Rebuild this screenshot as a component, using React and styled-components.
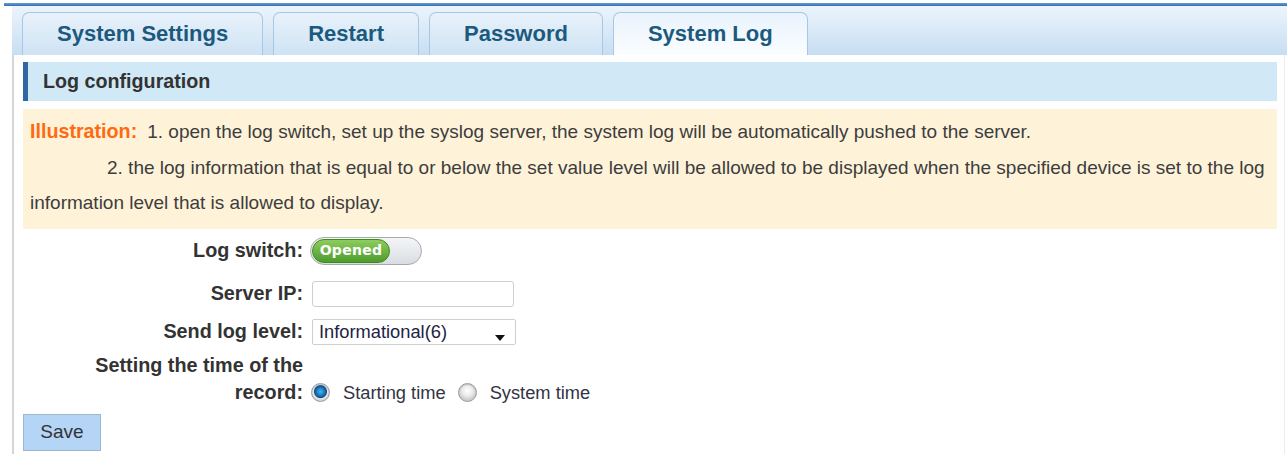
import React, { useState } from "react";
import styled, { createGlobalStyle } from "styled-components";

const GlobalStyle = createGlobalStyle`
  body {
    margin: 0;
    background: #ffffff;
    font-family: "Liberation Sans", Arial, sans-serif;
    color: #333333;
  }
`;

const Page = styled.div`
  padding: 3px 0 0 4px;
`;

const TopLine = styled.div`
  height: 3px;
  background: linear-gradient(#6a9fd6, #2f6db3);
`;

const Frame = styled.div`
  margin-left: 8px;
`;

const TabBar = styled.div`
  display: flex;
  align-items: flex-end;
  gap: 10px;
  height: 49px;
  padding-left: 10px;
  background: linear-gradient(#ecf4fc, #c7def2);
`;

const Tab = styled.div`
  height: 42px;
  padding: 0 34px;
  display: flex;
  align-items: center;
  justify-content: center;
  border: 1px solid #a6c7e5;
  border-bottom: none;
  border-radius: 7px 7px 0 0;
  font-size: 22px;
  font-weight: bold;
  color: #1b5a7e;
  background: ${(p) =>
    p.$active
      ? "linear-gradient(#e9f3fc, #fbfdff)"
      : "linear-gradient(#e8f2fb, #cfe3f4)"};
  cursor: pointer;
`;

const Content = styled.div`
  border-left: 2px solid #d6d6d6;
  border-right: 1px solid #ececec;
  padding: 7px 7px 4px 9px;
  margin-right: 2px;
`;

const SectionHead = styled.div`
  height: 39px;
  display: flex;
  align-items: center;
  padding-left: 15px;
  background: #d1e8f6;
  border-left: 5px solid #2f67a3;
  font-size: 19.7px;
  font-weight: bold;
  color: #333333;
`;

const Note = styled.div`
  margin-top: 8px;
  padding: 5px 8px 8px 7px;
  background: #fef3d9;
  font-size: 19px;
  line-height: 35.5px;
  color: #3d3d3d;
`;

const NoteTitle = styled.span`
  color: #ff6a10;
  font-size: 19.7px;
  font-weight: bold;
  margin-right: 10px;
`;

const Indent = styled.span`
  display: inline-block;
  width: 77px;
`;

const Form = styled.div`
  display: flex;
  flex-direction: column;
`;

const Row = styled.div`
  display: grid;
  grid-template-columns: 287px auto;
  align-items: center;
  height: ${(p) => p.$h}px;
`;

const Label = styled.div`
  text-align: right;
  padding: 0 7px 0 50px;
  font-size: 19.8px;
  font-weight: bold;
  line-height: 27px;
  color: #333333;
`;

const Field = styled.div`
  display: flex;
  align-items: center;
  align-self: ${(p) => (p.$bottom ? "end" : "center")};
  padding-bottom: ${(p) => (p.$bottom ? 3 : 0)}px;
  line-height: 27px;
`;

const Switch = styled.div`
  position: relative;
  width: 112px;
  height: 28px;
  box-sizing: border-box;
  border: 1px solid #a9a9a9;
  border-radius: 14px;
  background: linear-gradient(#f4f5f7, #d9dde2);
`;

const SwitchKnob = styled.div`
  position: absolute;
  left: 1px;
  top: 1px;
  width: 78px;
  height: 24px;
  box-sizing: border-box;
  border: 1px solid #3e8a1f;
  border-radius: 12px;
  background: linear-gradient(#8ccd5e, #4e9c2c);
  display: flex;
  align-items: center;
  justify-content: center;
  color: #ffffff;
  font-size: 14px;
  font-weight: bold;
  font-family: "DejaVu Sans", sans-serif;
  letter-spacing: 0.3px;
`;

const TextBox = styled.input`
  width: 202px;
  height: 26px;
  box-sizing: border-box;
  margin: 0 0 0 2px;
  border: 1px solid #cfcfcf;
  border-radius: 3px;
  background: #ffffff;
  outline: none;
`;

const Select = styled.div`
  position: relative;
  width: 204px;
  height: 26px;
  box-sizing: border-box;
  margin-left: 2px;
  padding-left: 6px;
  border: 1px solid #cfcfcf;
  border-radius: 2px;
  display: flex;
  align-items: center;
  font-size: 18.3px;
  color: #222244;
`;

const Caret = styled.span`
  position: absolute;
  right: 10px;
  top: 15px;
  width: 0;
  height: 0;
  border-left: 5px solid transparent;
  border-right: 5px solid transparent;
  border-top: 6px solid #111111;
`;

const RadioWrap = styled.label`
  display: inline-flex;
  align-items: center;
  font-size: 18.3px;
  color: #333344;
  margin-right: 11px;
  cursor: pointer;
`;

const RadioDot = styled.span`
  width: 19px;
  height: 19px;
  box-sizing: border-box;
  margin: 0 13px 0 1px;
  border-radius: 50%;
  border: 1px solid #9c9c9c;
  background: ${(p) =>
    p.$on
      ? "radial-gradient(circle at 50% 45%, #4db4ef 0, #1a78bd 4px, #0d4f86 6px, #e9e9e9 7px, #cfcfcf 9px)"
      : "radial-gradient(circle at 50% 40%, #ffffff 0, #ececec 5px, #cccccc 9px)"};
  box-shadow: inset 0 1px 1px rgba(0, 0, 0, 0.15);
`;

const SaveButton = styled.button`
  margin-top: 5px;
  width: 78px;
  height: 37px;
  border: 1px solid #9db7cf;
  background: #b4d5f6;
  font-family: "Liberation Sans", Arial, sans-serif;
  font-size: 19px;
  color: #333333;
  cursor: pointer;
`;

const tabs = ["System Settings", "Restart", "Password", "System Log"];

export default function App() {
  const [active, setActive] = useState(3);
  const [timeMode, setTimeMode] = useState("start");

  return (
    <Page>
      <GlobalStyle />
      <TopLine />
      <Frame>
        <TabBar>
          {tabs.map((t, i) => (
            <Tab key={t} $active={i === active} onClick={() => setActive(i)}>
              {t}
            </Tab>
          ))}
        </TabBar>
        <Content>
          <SectionHead>Log configuration</SectionHead>
          <Note>
            <NoteTitle>Illustration:</NoteTitle>
            1. open the log switch, set up the syslog server, the system log will
            be automatically pushed to the server.
            <br />
            <Indent />
            2. the log information that is equal to or below the set value level
            will be allowed to be displayed when the specified device is set to
            the log information level that is allowed to display.
          </Note>
          <Form>
            <Row $h={44}>
              <Label>Log switch:</Label>
              <Field>
                <Switch>
                  <SwitchKnob>Opened</SwitchKnob>
                </Switch>
              </Field>
            </Row>
            <Row $h={42}>
              <Label>Server IP:</Label>
              <Field>
                <TextBox type="text" />
              </Field>
            </Row>
            <Row $h={34}>
              <Label>Send log level:</Label>
              <Field>
                <Select>
                  Informational(6)
                  <Caret />
                </Select>
              </Field>
            </Row>
            <Row $h={60}>
              <Label>Setting the time of the record:</Label>
              <Field $bottom>
                <RadioWrap onClick={() => setTimeMode("start")}>
                  <RadioDot $on={timeMode === "start"} />
                  Starting time
                </RadioWrap>
                <RadioWrap onClick={() => setTimeMode("system")}>
                  <RadioDot $on={timeMode === "system"} />
                  System time
                </RadioWrap>
              </Field>
            </Row>
            <div>
              <SaveButton>Save</SaveButton>
            </div>
          </Form>
        </Content>
      </Frame>
    </Page>
  );
}
